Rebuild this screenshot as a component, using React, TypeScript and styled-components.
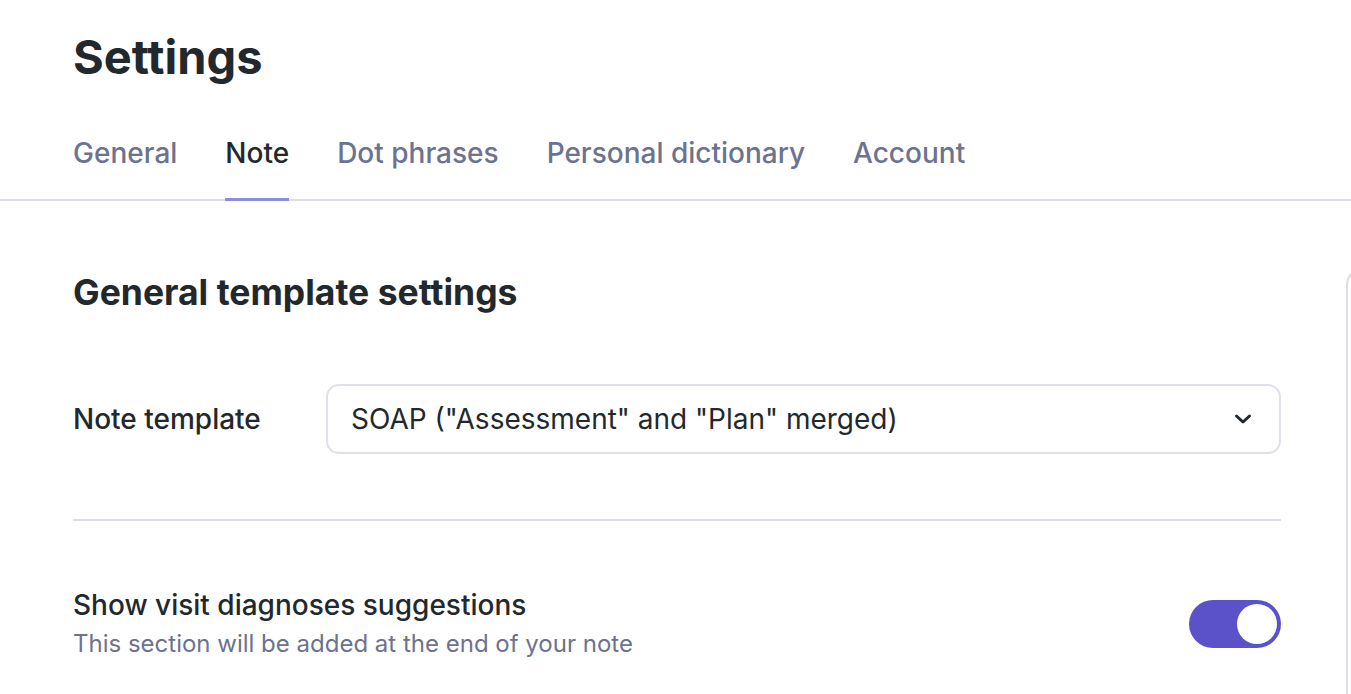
import React from "react";
import styled, { createGlobalStyle } from "styled-components";

const Global = createGlobalStyle`
  html, body { margin: 0; padding: 0; background: #ffffff; }
  body { font-family: Inter, "Noto Sans", sans-serif; color: #22282c; overflow: hidden; }
  * { box-sizing: border-box; }
`;

const Page = styled.div`
  width: 1351px;
  height: 694px;
  overflow: hidden;
  display: flex;
  flex-direction: column;
`;

const Title = styled.h1`
  margin: 28px 0 0 73px;
  font-size: 47px;
  line-height: 57px;
  font-weight: 700;
  color: #22282c;
`;

const TabBar = styled.nav`
  margin-top: 51px;
  display: flex;
  gap: 48px;
  padding-left: 73px;
  border-bottom: 2px solid #dddde9;
`;

const Tab = styled.div<{ $active?: boolean }>`
  font-size: 28px;
  line-height: 34px;
  font-weight: 500;
  padding-bottom: 28px;
  margin-bottom: -2px;
  color: ${(p) => (p.$active ? "#22282c" : "#6c7290")};
  border-bottom: 3px solid ${(p) => (p.$active ? "#8a8fdd" : "transparent")};
`;

const Body = styled.div`
  display: flex;
  gap: 65px;
`;

const Main = styled.section`
  width: 1281px;
  flex-shrink: 0;
  padding-left: 73px;
  padding-top: 71px;
`;

const SideCard = styled.aside`
  margin-top: 66px;
  width: 400px;
  height: 600px;
  flex-shrink: 0;
  border: 2px solid #dddde9;
  border-radius: 18px;
`;

const SectionTitle = styled.h2`
  margin: 0;
  font-size: 35.5px;
  line-height: 42px;
  font-weight: 700;
  color: #22282c;
`;

const FieldRow = styled.div`
  margin-top: 70px;
  display: flex;
  align-items: center;
`;

const FieldLabel = styled.label`
  width: 253px;
  flex-shrink: 0;
  font-size: 28px;
  font-weight: 500;
  color: #22282c;
`;

const Select = styled.div`
  flex: 1;
  height: 70px;
  border: 2px solid #dfe0ea;
  border-radius: 13px;
  display: flex;
  align-items: center;
  justify-content: space-between;
  padding: 0 27px 0 23px;
  font-size: 28px;
  font-weight: 400;
  color: #22282c;
`;

const Divider = styled.hr`
  margin: 65px 0 0 0;
  border: none;
  height: 2px;
  background: #dddde9;
`;

const ToggleRow = styled.div`
  margin-top: 66px;
  display: flex;
  align-items: center;
  justify-content: space-between;
`;

const ToggleText = styled.div`
  display: flex;
  flex-direction: column;
  gap: 5px;
`;

const ToggleTitle = styled.div`
  font-size: 28px;
  line-height: 36px;
  font-weight: 500;
  color: #22282c;
`;

const ToggleHint = styled.div`
  font-size: 24px;
  line-height: 32px;
  font-weight: 400;
  color: #6c7290;
`;

const Switch = styled.button<{ $on: boolean }>`
  width: 92px;
  height: 48px;
  border: none;
  border-radius: 24px;
  padding: 4px;
  background: ${(p) => (p.$on ? "#5b52c9" : "#d6d7e3")};
  display: flex;
  justify-content: ${(p) => (p.$on ? "flex-end" : "flex-start")};
  cursor: pointer;
`;

const Knob = styled.span`
  width: 40px;
  height: 40px;
  border-radius: 50%;
  background: #ffffff;
`;

const Chevron = () => (
  <svg width="18" height="12" viewBox="0 0 18 12" fill="none">
    <path d="M2.5 3 L9 9 L15.5 3" stroke="#22282c" strokeWidth="3" strokeLinecap="round" strokeLinejoin="round" />
  </svg>
);

const tabs = ["General", "Note", "Dot phrases", "Personal dictionary", "Account"];

export default function App() {
  const [on, setOn] = React.useState(true);
  return (
    <>
      <Global />
      <Page>
        <Title>Settings</Title>
        <TabBar>
          {tabs.map((t) => (
            <Tab key={t} $active={t === "Note"}>
              {t}
            </Tab>
          ))}
        </TabBar>
        <Body>
          <Main>
            <SectionTitle>General template settings</SectionTitle>
            <FieldRow>
              <FieldLabel>Note template</FieldLabel>
              <Select>
                <span>SOAP ("Assessment" and "Plan" merged)</span>
                <Chevron />
              </Select>
            </FieldRow>
            <Divider />
            <ToggleRow>
              <ToggleText>
                <ToggleTitle>Show visit diagnoses suggestions</ToggleTitle>
                <ToggleHint>This section will be added at the end of your note</ToggleHint>
              </ToggleText>
              <Switch $on={on} onClick={() => setOn(!on)}>
                <Knob />
              </Switch>
            </ToggleRow>
          </Main>
          <SideCard />
        </Body>
      </Page>
    </>
  );
}
